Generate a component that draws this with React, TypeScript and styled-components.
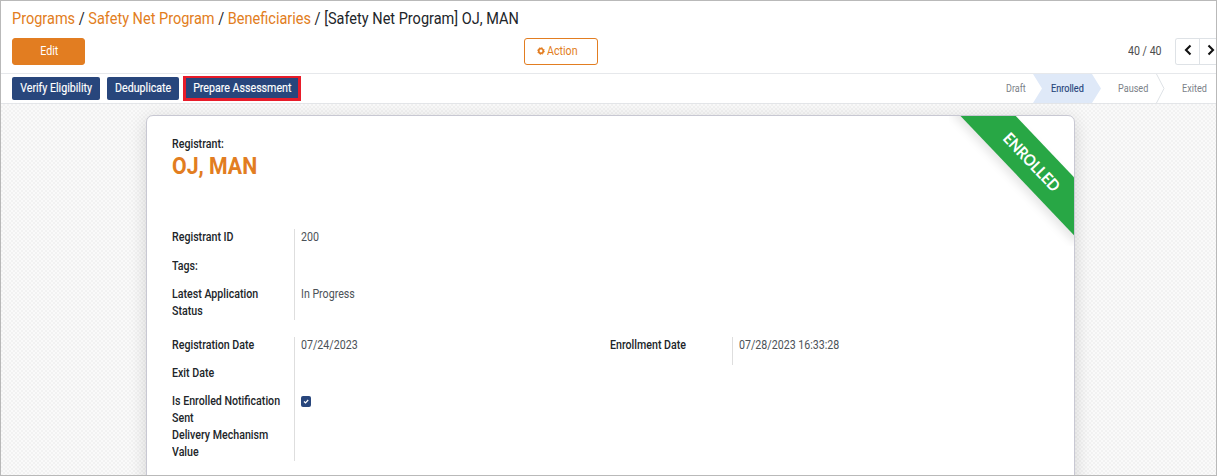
import React from 'react';
import styled, { createGlobalStyle } from 'styled-components';

const Global = createGlobalStyle`
  * { box-sizing: border-box; }
  body { margin: 0; font-family: Roboto, "Liberation Sans", sans-serif; font-size: 12.2px; color: #4c4c4c; background: #fff; }
  button { font-family: inherit; }
`;

const Frame = styled.div`
  width: 1217px; height: 476px; border: 1px solid #b9b9b9; overflow: hidden;
  display: flex; flex-direction: column; background: #fff;
`;
const Narrow = styled.span<{ $x?: number; $from?: string }>`
  display: inline-block; white-space: nowrap;
  transform: scaleX(${p => p.$x ?? 0.873});
  transform-origin: ${p => p.$from ?? 'left'} center;
`;

const ControlPanel = styled.header`
  height: 73px; flex: none; padding: 8px 0 0 11px; border-bottom: 1px solid #e6e8eb;
`;
const Crumbs = styled.nav`
  height: 20px; line-height: 20px; font-size: 16.2px; color: #212529; white-space: nowrap;
`;
const Crumb = styled.a`color: #e27d21;`;
const Toolbar = styled.div`
  display: grid; grid-template-columns: 512px 1fr auto; align-items: center; margin-top: 9px; height: 27px;
`;
const ToolButton = styled.button<{ $outline?: boolean }>`
  width: ${p => (p.$outline ? 74 : 73)}px; height: 27px; padding: 0 0 2px; border: 1px solid #e27d21; border-radius: 3px;
  display: flex; align-items: center; justify-content: center; gap: 2px; font-size: 12.2px;
  background: ${p => (p.$outline ? '#fff' : '#e27d21')};
  color: ${p => (p.$outline ? '#e27d21' : '#fff')};
  ${p => (p.$outline ? 'padding-right: 3px;' : 'padding-left: 1px;')}
`;
const Pager = styled.div`display: flex; align-items: center; height: 27px;`;
const Count = styled.span`width: 47px; padding-bottom: 2px; white-space: nowrap;`;
const PagerButtons = styled.div`
  display: flex; width: 41px; height: 27px; overflow: hidden;
  border: 1px solid #dee2e6; border-right: 0; border-radius: 3px 0 0 3px;
`;
const PagerButton = styled.button`
  width: 24px; flex: none; border: 0; border-right: 1px solid #dee2e6; background: #fff; padding: 0 0 3px 1px;
  display: flex; align-items: center; justify-content: center;
  & + & { padding: 0 2px 3px 0; }
`;

const StatusBar = styled.div`
  height: 30px; flex: none; display: flex; justify-content: space-between; padding-left: 11px;
  border-bottom: 1px solid #e3e5e8;
`;
const Actions = styled.div`display: flex; align-items: flex-start; padding-top: 3px;`;
const ActionButton = styled.button<{ $w: number }>`
  width: ${p => p.$w}px; height: 23px; margin-right: 7px; border: 0; border-radius: 2px; padding: 0 0 2px;
  background: #28467c; color: #fff; font-size: 12.2px; -webkit-text-stroke: 0.15px #fff;
  display: flex; align-items: center; justify-content: center;
`;
const Highlight = styled.div`
  margin: -1px 0 0 -3px; border: 3px solid #e81c2a; border-top-width: 2px; height: 25px; width: 118px;
  display: flex; justify-content: center; background: #28467c;
  ${ActionButton} { margin: 0; height: 20px; padding-bottom: 1px; padding-left: 1px; }
`;
const Stages = styled.div`display: flex; height: 29px; font-size: 10px; color: #7b8188;`;
const Stage = styled.div<{ $w: number; $pad: number; $active?: boolean }>`
  width: ${p => p.$w}px; padding-left: ${p => p.$pad}px; line-height: 29px; white-space: nowrap;
  ${p => p.$active && `
    background: #dfe9f8; color: #28467c; -webkit-text-stroke: 0.15px #28467c;
    clip-path: polygon(0 0, 59px 0, 68px 50%, 59px 100%, 0 100%, 9px 50%);
  `}
`;
const Divider = styled.svg`display: block; width: 9px; height: 29px;`;

const Canvas = styled.main`
  flex: 1; min-height: 0; padding: 11px 0 0 145px; overflow: hidden;
  background: repeating-conic-gradient(#f2f2f2 0 25%, #fafafa 0 50%) 0 0 / 4px 4px;
`;
const Sheet = styled.section`
  position: relative; width: 929px; height: 420px; padding: 20px 0 0 25px; background: #fff;
  border: 1px solid #c8c8d3; border-radius: 7px; box-shadow: 0 4px 18px rgba(0,0,0,.15); overflow: visible;
`;
const RibbonBox = styled.div`
  position: absolute; right: 0; top: 0; width: 125px; height: 130px; overflow: hidden; border-radius: 0 6px 0 0;
`;
const Ribbon = styled.div`
  position: absolute; left: -8.5px; top: 25px; width: 180px; height: 40px; transform: rotate(46.4deg);
  background: #28a745; box-shadow: 0 5px 10px rgba(0,0,0,.1); color: #fff;
  font: 700 16px/40px Lato, sans-serif; text-align: center; padding-left: 2px;
`;
const Label = styled.div`height: 17px; line-height: 17px; font-weight: 500; color: #212529; white-space: nowrap;`;
const Title = styled.h1`
  margin: -1px 0 49px; height: 28px; line-height: 28px; font-size: 23.5px; font-weight: 700; color: #e27d21;
`;
const Groups = styled.div`display: grid; grid-template-columns: 437.5px 1fr; align-items: start; row-gap: 17px;`;
const Group = styled.dl<{ $h: number }>`
  margin: 0; height: ${p => p.$h}px; display: flex; flex-direction: column;
  background: linear-gradient(#dedede, #dedede) 122px 0 / 1px 100% no-repeat;
`;
const Field = styled.div<{ $h: number }>`
  display: grid; grid-template-columns: 129px 1fr; height: ${p => p.$h}px; flex: none; line-height: 16.7px;
`;
const FieldName = styled.dt`font-weight: 500; color: #212529;`;
const Value = styled.dd`margin: 0; color: #4c5258;`;
const Check = styled.svg`display: block; width: 10px; height: 11px; margin-top: 3px;`;

const Row = ({ h, lines, children }: { h: number; lines: string[]; children?: React.ReactNode }) => (
  <Field $h={h}>
    <FieldName>{lines.map(l => <div key={l}><Narrow>{l}</Narrow></div>)}</FieldName>
    <Value>{children}</Value>
  </Field>
);
const Chevron = ({ right }: { right?: boolean }) => (
  <svg width="8" height="12" viewBox="0 0 8 12" fill="none" stroke="#111" strokeWidth="2.1">
    <path d={right ? 'M1.5 1.5 6 6 1.5 10.5' : 'M6.5 1.5 2 6 6.5 10.5'} />
  </svg>
);

export default function App() {
  return (
    <Frame>
      <Global />
      <ControlPanel>
        <Crumbs>
          <Narrow $x={0.8965}>
            <Crumb>Programs</Crumb> / <Crumb>Safety Net Program</Crumb> / <Crumb>Beneficiaries</Crumb> / [Safety Net Program] OJ, MAN
          </Narrow>
        </Crumbs>
        <Toolbar>
          <ToolButton><Narrow $from="center">Edit</Narrow></ToolButton>
          <ToolButton $outline>
            <svg width="8" height="8" viewBox="0 0 8 8" fill="none" stroke="#e27d21">
              <circle cx="4" cy="4" r="2.3" strokeWidth="1.7" />
              <circle cx="4" cy="4" r="3.3" strokeWidth="1" strokeDasharray="1.3 1.29" />
            </svg>
            <Narrow>Action</Narrow>
          </ToolButton>
          <Pager>
            <Count><Narrow>40 / 40</Narrow></Count>
            <PagerButtons>
              <PagerButton><Chevron /></PagerButton>
              <PagerButton><Chevron right /></PagerButton>
            </PagerButtons>
          </Pager>
        </Toolbar>
      </ControlPanel>
      <StatusBar>
        <Actions>
          <ActionButton $w={88}><Narrow $from="center">Verify Eligibility</Narrow></ActionButton>
          <ActionButton $w={72}><Narrow $from="center">Deduplicate</Narrow></ActionButton>
          <Highlight><ActionButton $w={112}><Narrow $from="center">Prepare Assessment</Narrow></ActionButton></Highlight>
        </Actions>
        <Stages>
          <Stage $w={28} $pad={1}><Narrow $x={0.9}>Draft</Narrow></Stage>
          <Stage $w={68} $pad={18} $active><Narrow $x={0.91}>Enrolled</Narrow></Stage>
          <Stage $w={55} $pad={17}><Narrow $x={0.91}>Paused</Narrow></Stage>
          <Divider viewBox="0 0 9 29" fill="none" stroke="#dee2e6"><path d="M.5 0 8 14.5.5 29" /></Divider>
          <Stage $w={51} $pad={17}><Narrow $x={0.91}>Exited</Narrow></Stage>
        </Stages>
      </StatusBar>
      <Canvas>
        <Sheet>
          <Label><Narrow>Registrant:</Narrow></Label>
          <Title><Narrow $x={0.905}>OJ, MAN</Narrow></Title>
          <Groups>
            <Group $h={91}>
              <Row h={29} lines={['Registrant ID']}><Narrow>200</Narrow></Row>
              <Row h={28} lines={['Tags:']} />
              <Row h={34} lines={['Latest Application', 'Status']}><Narrow>In Progress</Narrow></Row>
            </Group>
            <div />
            <Group $h={124}>
              <Row h={28} lines={['Registration Date']}><Narrow>07/24/2023</Narrow></Row>
              <Row h={28} lines={['Exit Date']} />
              <Row h={34} lines={['Is Enrolled Notification', 'Sent']}>
                <Check viewBox="0 0 10 11"><rect width="10" height="11" rx="2" fill="#28467c" /><path d="M3 5.5 4.5 7 7.2 4" fill="none" stroke="#fff" strokeWidth="1.2" /></Check>
              </Row>
              <Row h={34} lines={['Delivery Mechanism', 'Value']} />
            </Group>
            <Group $h={28}>
              <Row h={28} lines={['Enrollment Date']}><Narrow>07/28/2023 16:33:28</Narrow></Row>
            </Group>
          </Groups>
          <RibbonBox><Ribbon><Narrow $x={0.9} $from="center">ENROLLED</Narrow></Ribbon></RibbonBox>
        </Sheet>
      </Canvas>
    </Frame>
  );
}
